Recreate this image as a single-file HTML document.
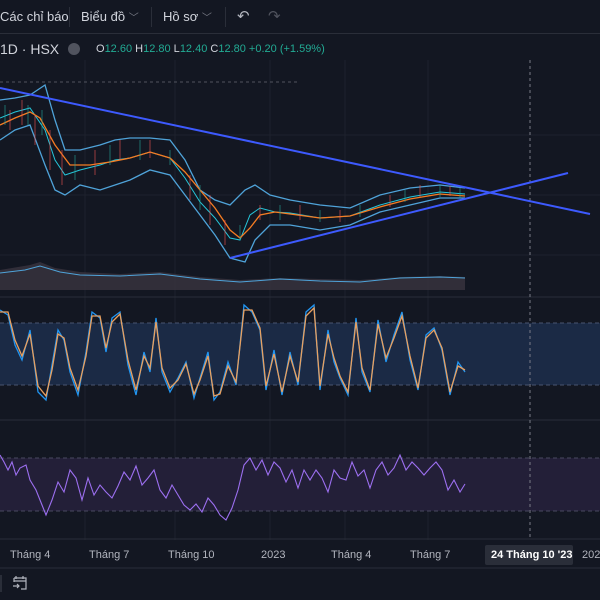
<!DOCTYPE html><html><head><style>
body{margin:0;width:600px;height:600px;background:#131722;overflow:hidden;font-family:"Liberation Sans",sans-serif;color:#d1d4dc;position:relative}
.t{position:absolute;font-size:13px;white-space:nowrap}
.ax{position:absolute;top:549px;font-size:11px;color:#b2b5be}
</style></head><body>
<div style="position:absolute;left:0;top:0;width:600px;height:33px;border-bottom:1px solid #2a2e39"></div>
<div class="t" style="left:0;top:9px">Các chỉ báo</div>
<div style="position:absolute;left:69px;top:7px;width:1px;height:20px;background:#2a2e39"></div>
<div class="t" style="left:81px;top:9px">Biểu đồ <span style="color:#787b86;font-size:10px">﹀</span></div>
<div style="position:absolute;left:151px;top:7px;width:1px;height:20px;background:#2a2e39"></div>
<div class="t" style="left:163px;top:9px">Hồ sơ <span style="color:#787b86;font-size:10px">﹀</span></div>
<div style="position:absolute;left:225px;top:7px;width:1px;height:20px;background:#2a2e39"></div>
<div class="t" style="left:237px;top:7px;font-size:15px;color:#b2b5be">↶</div>
<div class="t" style="left:268px;top:7px;font-size:15px;color:#50535e">↷</div>
<div class="t" style="left:0;top:41px;font-size:14px">1D · HSX</div>
<div style="position:absolute;left:68px;top:43px;width:12px;height:12px;border-radius:6px;background:#50535e"></div>
<div class="t" style="left:96px;top:43px;font-size:11px;color:#d1d4dc">O<span style="color:#22ab94">12.60</span> H<span style="color:#22ab94">12.80</span> L<span style="color:#22ab94">12.40</span> C<span style="color:#22ab94">12.80 +0.20 (+1.59%)</span></div>
<svg style="position:absolute;left:0;top:0" width="600" height="600">
<g stroke="#1e222d" stroke-width="1">
<line x1="85" y1="60" x2="85" y2="540"/><line x1="175" y1="60" x2="175" y2="540"/><line x1="270" y1="60" x2="270" y2="540"/><line x1="345" y1="60" x2="345" y2="540"/><line x1="428" y1="60" x2="428" y2="540"/>
<line x1="0" y1="135" x2="600" y2="135"/><line x1="0" y1="195" x2="600" y2="195"/><line x1="0" y1="255" x2="600" y2="255"/>
</g>
<line x1="0" y1="82" x2="300" y2="82" stroke="#50535e" stroke-dasharray="3,3"/>
<rect x="0" y="323" width="600" height="62" fill="#1b2a45"/>
<line x1="0" y1="323" x2="600" y2="323" stroke="#4a5470" stroke-dasharray="4,3"/>
<line x1="0" y1="385" x2="600" y2="385" stroke="#4a5470" stroke-dasharray="4,3"/>
<rect x="0" y="458" width="600" height="53" fill="#231f38"/>
<line x1="0" y1="458" x2="600" y2="458" stroke="#4a4860" stroke-dasharray="4,3"/>
<line x1="0" y1="511" x2="600" y2="511" stroke="#4a4860" stroke-dasharray="4,3"/>
<line x1="0" y1="297" x2="600" y2="297" stroke="#2a2e39"/>
<line x1="0" y1="420" x2="600" y2="420" stroke="#2a2e39"/>
<line x1="530" y1="60" x2="530" y2="540" stroke="#787b86" stroke-dasharray="3,3"/>
<line x1="0" y1="539" x2="600" y2="539" stroke="#2a2e39"/>
<line x1="0" y1="568" x2="600" y2="568" stroke="#2a2e39"/>
<path d="M0,270 L30,265 40,262 55,268 80,272 120,274 160,272 200,277 240,280 280,278 320,279 360,280 400,277 440,276 465,277 L465,290 0,290Z" fill="#3a3540" opacity=".8"/>
<polyline fill="none" stroke="#4fa3d9" stroke-width="1" points="0,273 25,270 40,266 60,272 80,275 120,276 160,274 200,279 240,282 280,279 320,281 360,282 400,278 440,277 465,278"/>
<g fill="none" stroke="#4fa3d9" stroke-width="1.3">
<polyline points="0,100 15,98 30,95 45,85 55,120 65,150 80,150 100,145 115,140 130,138 150,138 170,140 185,160 200,190 215,200 230,205 245,190 255,185 270,195 290,200 320,205 350,208 380,195 410,188 440,185 465,188"/>
<polyline points="0,140 15,130 30,125 45,165 55,190 65,195 80,185 100,190 115,185 130,180 150,170 170,175 185,195 200,215 215,235 230,258 245,262 255,240 270,225 290,225 320,230 350,225 380,212 410,205 440,198 465,198"/>
</g>
<polyline fill="none" stroke="#26c6da" stroke-width="1" points="0,118 15,112 30,108 45,130 55,160 65,175 80,170 100,165 115,160 130,158 150,152 170,158 185,178 200,202 215,218 230,238 240,240 250,215 260,208 275,212 290,213 320,218 350,216 380,205 410,197 440,192 465,194"/>
<polyline fill="none" stroke="#f57c22" stroke-width="1.3" points="0,125 15,118 30,112 40,118 55,145 70,165 90,165 110,162 130,158 150,152 170,158 185,172 200,190 215,208 230,230 240,238 250,228 260,215 275,212 290,214 320,218 350,216 380,207 410,199 440,194 465,196"/>
<g stroke="#ef5350" stroke-width="1" opacity=".6">
<path d="M10,110v20M22,100v25M35,115v30M50,130v40M62,150v35M95,150v25M120,140v20M150,140v18M190,175v25M210,195v30M225,220v25M260,205v15M300,205v15M340,210v12M390,195v12M420,185v12M450,186v10"/>
</g>
<g stroke="#26a69a" stroke-width="1" opacity=".6">
<path d="M5,105v20M28,105v20M42,110v25M75,155v25M110,145v20M140,140v20M170,150v15M200,185v25M240,225v15M280,205v15M320,210v12M360,205v12M405,190v12M440,185v12M460,188v10"/>
</g>
<line x1="0" y1="88" x2="590" y2="214" stroke="#3d5afe" stroke-width="2"/>
<line x1="230" y1="258" x2="568" y2="173" stroke="#3d5afe" stroke-width="2"/>
<polyline fill="none" stroke="#2196f3" stroke-width="1.3" points="0,310 8,315 15,345 22,360 30,330 38,392 46,400 52,365 58,330 64,340 70,372 78,395 86,352 92,312 100,318 106,352 112,318 120,312 128,365 136,395 144,352 150,372 156,318 162,372 170,392 178,378 186,362 194,398 200,378 208,352 214,400 220,392 228,362 236,385 244,305 252,312 260,330 266,390 274,350 282,395 290,352 298,385 306,312 314,305 320,390 328,330 334,362 340,378 348,395 356,318 362,372 370,392 378,320 386,362 394,335 402,312 410,360 418,390 426,335 434,328 442,350 450,395 458,362 465,372"/>
<polyline fill="none" stroke="#e8a060" stroke-width="1.3" points="0,312 8,312 15,340 22,356 30,334 38,386 46,396 52,370 58,334 64,338 70,368 78,390 86,356 92,316 100,316 106,348 112,322 120,314 128,360 136,390 144,356 150,368 156,322 162,368 170,388 178,380 186,364 194,394 200,380 208,356 214,396 220,394 228,366 236,382 244,310 252,310 260,328 266,386 274,354 282,392 290,356 298,382 306,316 314,308 320,386 328,334 334,358 340,376 348,392 356,322 362,368 370,390 378,324 386,358 394,338 402,316 410,356 418,388 426,338 434,330 442,348 450,392 458,366 465,370"/>
<polyline fill="none" stroke="#9c6ff0" stroke-width="1.1" points="0,455 4,462 8,470 12,462 16,475 20,468 26,465 30,480 36,490 42,505 46,515 52,500 58,482 64,492 70,470 76,478 82,500 88,478 94,495 100,485 106,492 112,498 118,486 124,472 130,480 136,466 142,485 148,478 154,470 160,490 166,498 172,485 178,495 184,505 190,510 196,504 202,512 208,498 214,505 220,515 226,520 232,508 238,490 244,465 250,458 256,470 262,460 268,475 274,462 280,468 286,482 292,470 298,488 304,470 310,480 316,470 322,478 328,492 334,470 340,478 346,480 352,462 358,476 364,470 370,488 376,470 382,462 388,475 394,468 400,455 406,470 412,462 418,468 424,475 430,468 436,462 442,470 448,490 454,480 460,492 465,484"/>
<rect x="485" y="545" width="88" height="20" rx="2" fill="#2a2e39"/>
</svg>
<div class="ax" style="left:10px">Tháng 4</div>
<div class="ax" style="left:89px">Tháng 7</div>
<div class="ax" style="left:168px">Tháng 10</div>
<div class="ax" style="left:261px">2023</div>
<div class="ax" style="left:331px">Tháng 4</div>
<div class="ax" style="left:410px">Tháng 7</div>
<div class="ax" style="left:491px;color:#fff;font-weight:bold">24 Tháng 10 '23</div>
<div class="ax" style="left:582px">2024</div>
<div style="position:absolute;left:0;top:575px;width:2px;height:17px;background:#2a2e39"></div>
<svg style="position:absolute;left:12px;top:575px" width="16" height="16" fill="none" stroke="#b2b5be" stroke-width="1.2"><path d="M4,1v3M11,1v3M2,3h12v11h-5M2,3v4M2,6h12M1,11h6M5,9l2,2-2,2"/></svg>
</body></html>
